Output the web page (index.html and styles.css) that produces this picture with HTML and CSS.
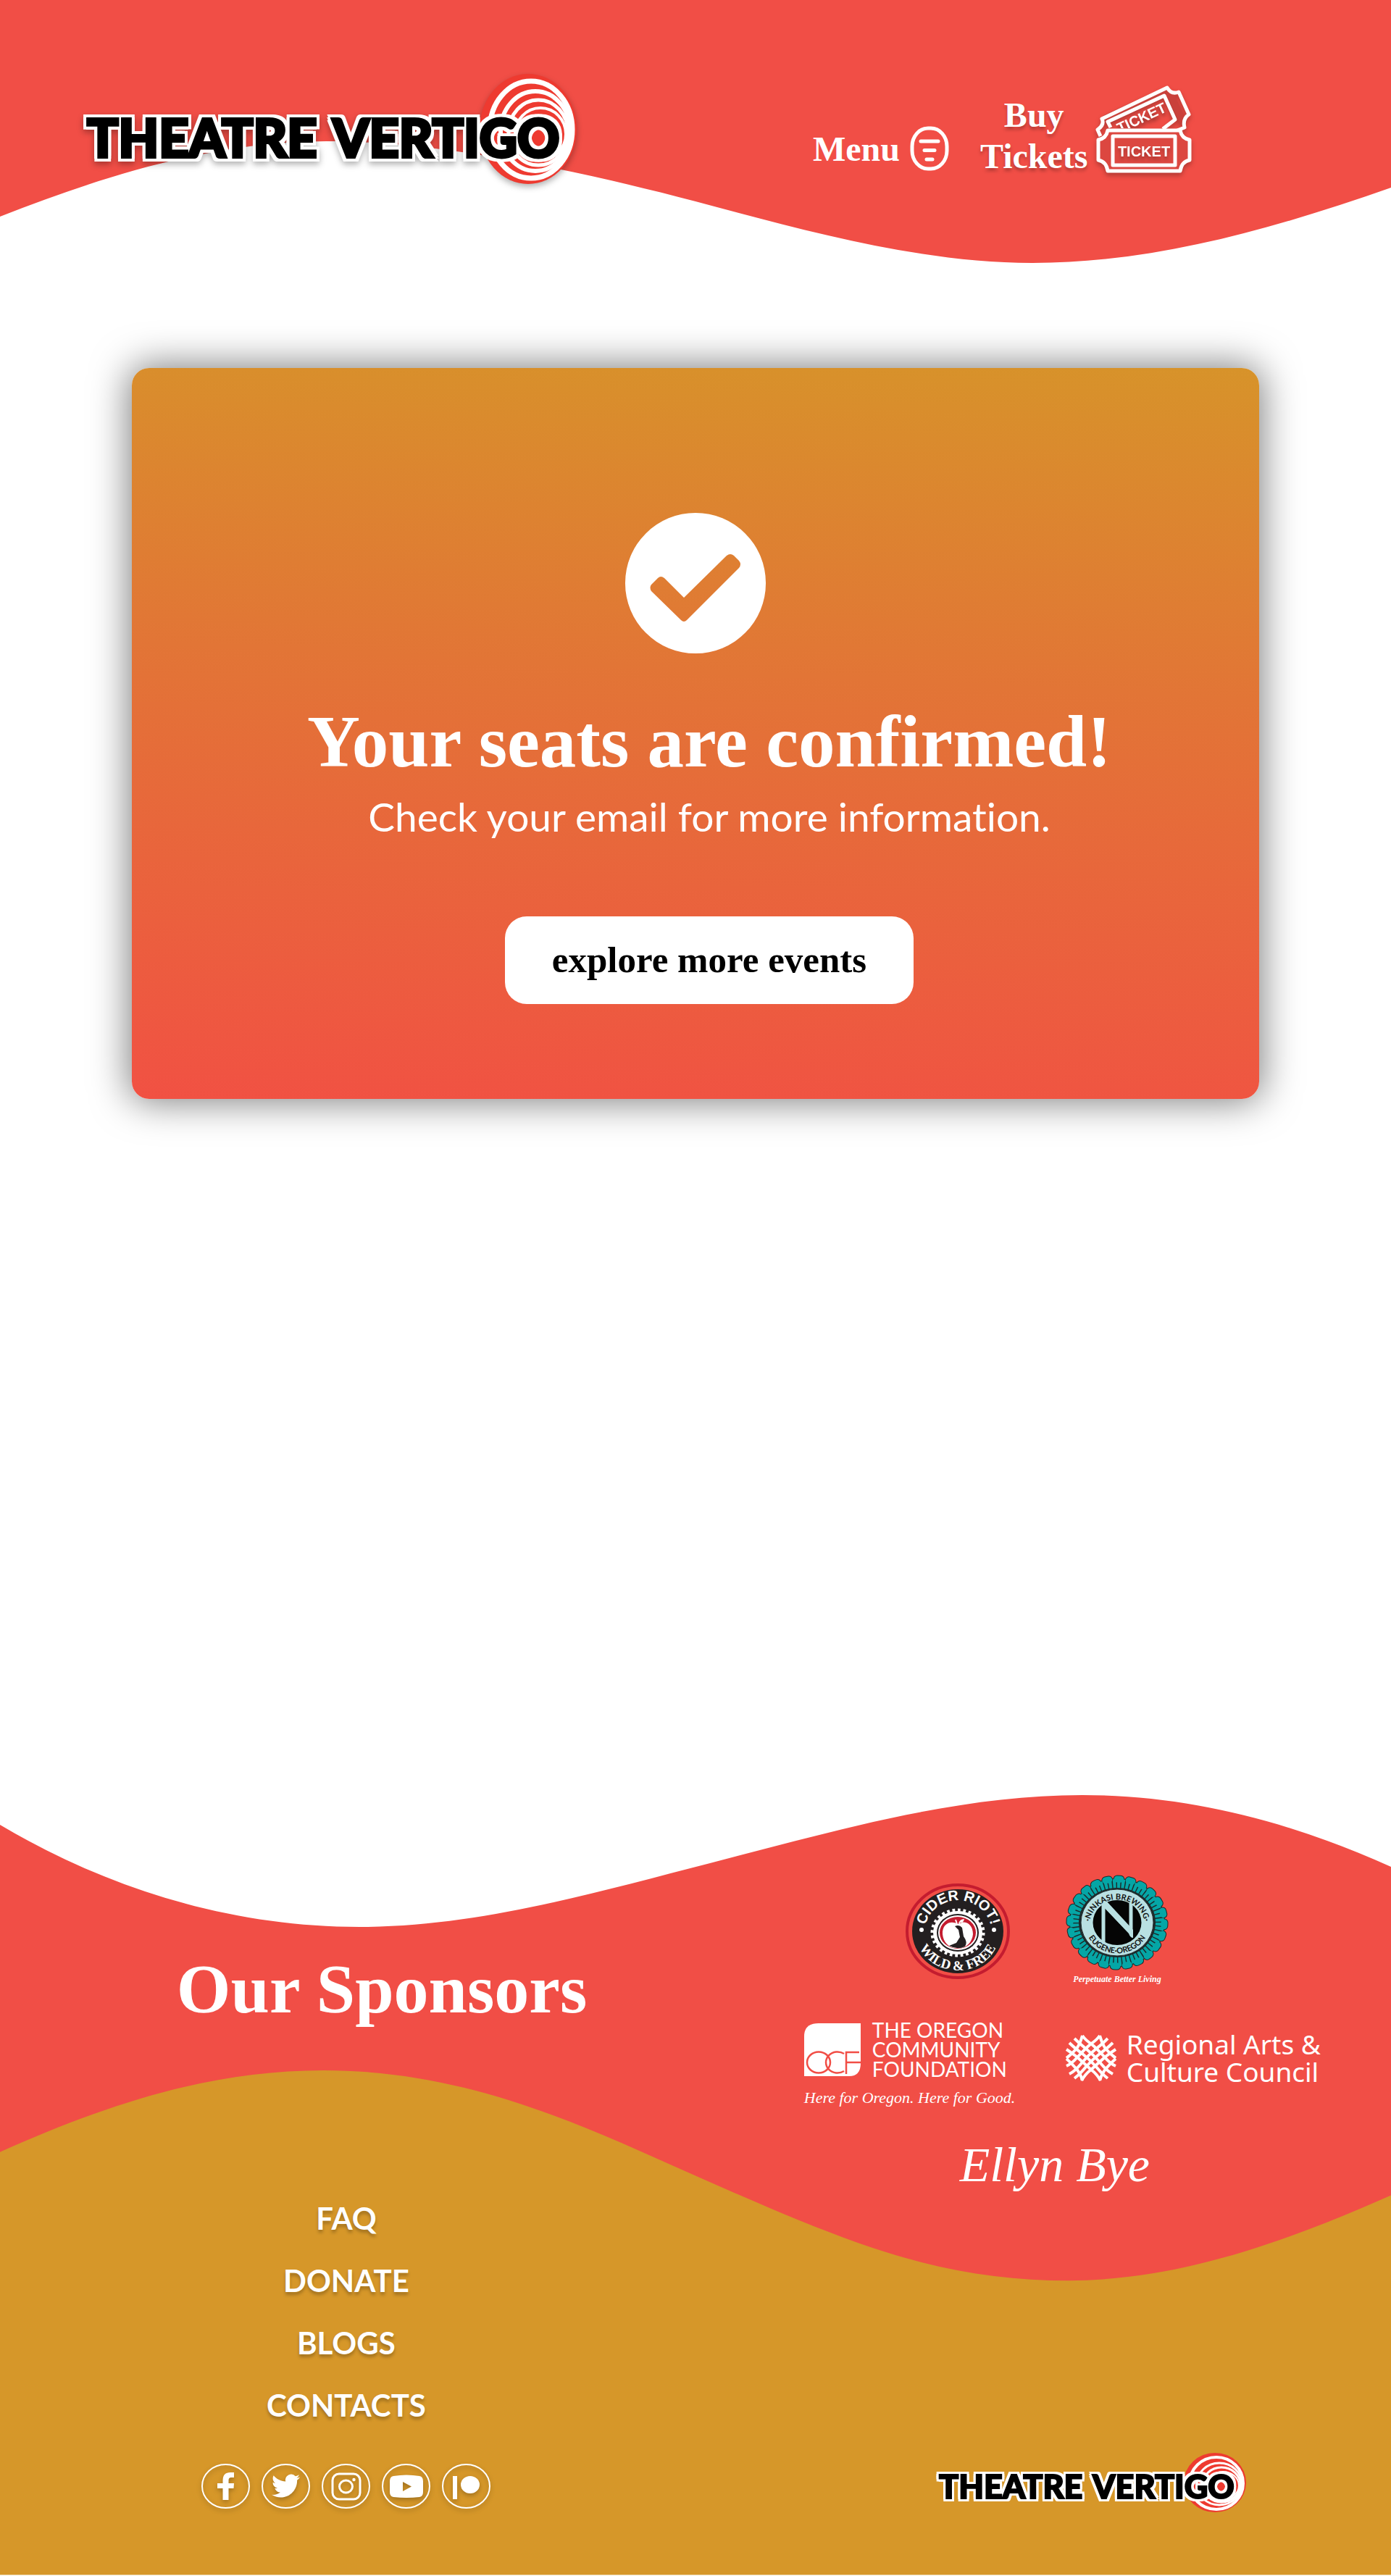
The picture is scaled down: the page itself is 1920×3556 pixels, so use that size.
FILE: index.html
```html
<!DOCTYPE html>
<html lang="en">
<head>
<meta charset="utf-8">
<meta name="viewport" content="width=device-width, initial-scale=1">
<title>Theatre Vertigo – Seats confirmed</title>
<link rel="stylesheet" href="styles.css">
</head>
<body>
<header class="site-header">
  <svg class="wave" viewBox="0 0 1920 363" preserveAspectRatio="none" aria-hidden="true">
    <path fill="#f14e46" d="M0 0H1920V259C1760 315 1595 363 1425 363C1270 363 1110 318 960 278C800 236 610 195 450 195C300 195 150 240 0 299Z"/>
  </svg>
  <a class="header-logo" href="#" aria-label="Theatre Vertigo home">
    <svg width="696" height="170" viewBox="0 0 696 170">
      <ellipse cx="620" cy="83" rx="67" ry="76" fill="#ee3a30"/>
      <g fill="none" stroke="#fff" stroke-width="7">
        <ellipse cx="624" cy="84" rx="57" ry="67"/>
        <ellipse cx="630" cy="86" rx="48" ry="55" stroke-width="6"/>
        <ellipse cx="634" cy="88" rx="41" ry="45" stroke-width="5"/>
        <ellipse cx="637" cy="90" rx="35" ry="36" stroke-width="4"/>
      </g>
      <g class="logo-text logo-text-large">
        <text x="11" y="122">THEATRE</text>
        <text x="350" y="122">VERTIGO</text>
      </g>
    </svg>
  </a>
  <nav class="main-nav" aria-label="Main">
    <button class="menu-button" type="button">Menu
      <svg width="54" height="62" viewBox="0 0 54 62" fill="none" stroke="#fff" stroke-width="5" stroke-linecap="round" aria-hidden="true">
        <rect x="3" y="3" width="48" height="56" rx="22" ry="25"/>
        <path d="M15 21H39M20 33.500H34M23 46H31"/>
      </svg>
    </button>
    <a class="tickets-link" href="#"><span>Buy<br>Tickets</span>
      <svg width="132" height="122" viewBox="0 0 132 122" aria-hidden="true">
        <g fill="none" stroke="#c9413b" stroke-width="10">
          <path d="M12 46L94 8M102 12L120 50M14 70V104M118 70V104M24 111H108M24 68H108"/>
        </g>
        <g fill="none" stroke="#fff" stroke-width="5" stroke-linejoin="round">
          <path d="M6 70L2 61Q12 54 8 46L98 3Q104 13 114 9L128 40Q119 46 122 58L112 62"/>
          <path d="M20 58L16 50L94 14L109 47L92 60"/>
          <path fill="#dc4740" d="M16 62H116Q118 73 129 75V103Q118 105 116 118H16Q14 105 3 103V75Q14 73 16 62Z"/>
          <rect x="23" y="70" width="86" height="40"/>
        </g>
        <text class="ticket-text" x="66" y="98" text-anchor="middle">TICKET</text>
        <g clip-path="url(#behind)"><text class="ticket-text" transform="rotate(-25 62 48)" x="64" y="52" text-anchor="middle">TICKET</text></g>
        <clipPath id="behind"><rect width="132" height="59"/></clipPath>
      </svg>
    </a>
  </nav>
</header>

<main class="page-main">
  <section class="confirm-card">
    <svg class="check" width="194" height="194" viewBox="0 0 194 194" role="img" aria-label="Confirmed">
      <path fill="#fff" fill-rule="evenodd" d="M97 0A97 97 0 1 1 97 194A97 97 0 1 1 97 0ZM36 99Q33 103 36 108L77 148Q81 152 85 148L157 76Q161 71 157 66L150 59Q145 55 140 59L81 117L54 90Q49 86 45 90Z"/>
    </svg>
    <div class="confirm-body">
      <h1>Your seats are confirmed!</h1>
      <p>Check your email for more information.</p>
      <button class="explore" type="button">explore more events</button>
    </div>
  </section>
</main>

<footer class="site-footer">
  <section class="sponsors">
    <svg class="wave" viewBox="0 0 1920 700" preserveAspectRatio="none" aria-hidden="true">
      <path fill="#f14e46" d="M0 41C150 130 320 182 496 182C660 182 820 135 980 94C1150 50 1320 0 1494 0C1640 0 1780 36 1920 99V700H0Z"/>
    </svg>
    <h2>Our Sponsors</h2>
    <div class="sponsor-logos">
      <div class="logo-row round-logos">
        <a href="#" aria-label="Cider Riot! Wild &amp; Free">
          <svg width="144" height="134" viewBox="0 0 144 134">
            <ellipse cx="72" cy="67" rx="70" ry="64" fill="none" stroke="#c41c2f" stroke-width="4"/>
            <ellipse cx="72" cy="67" rx="63" ry="58" fill="#231f20"/>
            <ellipse cx="72" cy="69" rx="34" ry="30" fill="#fff"/>
            <ellipse cx="72" cy="69" rx="35" ry="31" fill="none" stroke="#fff" stroke-width="5" pathLength="112" stroke-dasharray="2 2"/>
            <ellipse cx="72" cy="69" rx="29" ry="26" fill="#231f20"/>
            <ellipse cx="72" cy="69" rx="27" ry="24" fill="#fff"/>
            <ellipse cx="72" cy="69" rx="25" ry="22" fill="#c41c2f"/>
            <path fill="#fff" d="M72 57C62 51 50 57 51 71C52 83 61 91 71 90C82 92 92 83 93 71C93 56 81 51 72 57ZM73 56Q75 50 81 50Q80 56 73 56Z"/>
            <path fill="#231f20" d="M68 60Q74 57 78 62L80 74Q86 82 82 88Q72 93 60 87L70 83L75 75L73 65Z"/>
            <path d="M71 57L69 51" stroke="#fff" stroke-width="2"/>
            <g fill="#fff"><circle cx="22" cy="65" r="3"/><circle cx="122" cy="65" r="3"/></g>
            <path id="cider-top" fill="none" d="M27 61A46 43 0 0 1 118 61"/>
            <path id="cider-low" fill="none" d="M15 70A57 51 0 0 0 129 70"/>
            <text class="cider-text"><textPath href="#cider-top" startOffset="50%" text-anchor="middle">CIDER RIOT!</textPath></text>
            <text class="wild-text"><textPath href="#cider-low" startOffset="50%" text-anchor="middle">WILD &amp; FREE</textPath></text>
          </svg>
        </a>
        <a href="#" aria-label="Ninkasi Brewing, Eugene Oregon">
          <svg width="144" height="156" viewBox="0 0 144 156">
            <g fill="none" stroke-linecap="round">
              <ellipse cx="72" cy="66" rx="65" ry="60" stroke="#1c2a2b" stroke-width="11" pathLength="240" stroke-dasharray="3 7"/>
              <ellipse cx="72" cy="66" rx="58" ry="53" stroke="#1c2a2b" stroke-width="16"/>
              <ellipse cx="72" cy="66" rx="65" ry="60" stroke="#05a6a6" stroke-width="9" pathLength="240" stroke-dasharray="3 7"/>
              <ellipse cx="72" cy="66" rx="59" ry="54" stroke="#05a6a6" stroke-width="12" stroke-linecap="butt" pathLength="240" stroke-dasharray="3 1"/>
            </g>
            <ellipse cx="72" cy="66" rx="50" ry="46" fill="#b9e0e2" stroke="#1c2a2b"/>
            <ellipse cx="72" cy="66" rx="33.500" ry="31" fill="#050505"/>
            <path fill="none" stroke="#b9e0e2" stroke-width="5" d="M53 94V40L91 80V36"/>
            <path fill="#b9e0e2" d="M47 38L57 36L94 76V87Q90 87 88 81Z"/>
            <path id="nin-top" fill="none" d="M34 69A38 35 0 0 1 110 69"/>
            <path id="nin-low" fill="none" d="M27 66A45 42.500 0 0 0 117 66"/>
            <text class="nin-text"><textPath href="#nin-top" startOffset="50%" text-anchor="middle">·NINKASI BREWING·</textPath></text>
            <text class="nin-text"><textPath href="#nin-low" startOffset="50%" text-anchor="middle">EUGENE·OREGON</textPath></text>
            <text class="perpetuate" x="72" y="148" text-anchor="middle">Perpetuate Better Living</text>
          </svg>
        </a>
      </div>
      <div class="logo-row wide-logos">
        <a class="ocf" href="#">
          <svg width="78" height="73" viewBox="0 0 78 73" aria-hidden="true">
            <path fill="#fff" d="M20 0H78V55Q78 73 62 73H0V18Q0 0 20 0Z"/>
            <g fill="none" stroke="#f14e46" stroke-width="2.500"><ellipse cx="20" cy="54" rx="16" ry="14.500"/><path d="M55 42A16 14.500 0 1 0 55 66M58 70V40H76M58 54H78"/></g>
          </svg>
          <span class="ocf-name">THE OREGON<br>COMMUNITY<br>FOUNDATION</span>
          <em>Here for Oregon. Here for Good.</em>
        </a>
        <a class="racc" href="#">
          <svg width="70" height="64" viewBox="0 0 70 64" fill="none" stroke="#fff" stroke-width="4" aria-hidden="true">
            <g id="strands">
              <path d="M1 43Q8 40 16 31Q26 20 34 13Q43 7 47 1"/>
              <path d="M1 32Q8 27 15 19Q20 12 23 1"/>
              <path d="M5 54Q13 50 22 39Q31 28 41 20Q51 12 58 5"/>
              <path d="M12 60Q20 54 28 44Q37 34 47 26Q58 18 65 11"/>
              <path d="M22 63Q27 54 35 48Q46 38 55 30Q63 24 69 20"/>
              <path d="M47 63Q50 52 57 45Q63 38 69 33"/>
            </g>
            <use href="#strands" transform="matrix(-1 0 0 1 70 0)"/>
          </svg>
          <span>Regional Arts &amp;<br>Culture Council</span>
        </a>
      </div>
      <a class="ellyn" href="#">Ellyn Bye</a>
    </div>
  </section>

  <section class="footer-base">
    <svg class="wave" viewBox="0 0 1920 698" preserveAspectRatio="none" aria-hidden="true">
      <path fill="#d69729" d="M0 113C150 46 290 0 447 0C600 0 730 45 857 100C985 156 1110 216 1224 252C1310 279 1390 291 1475 291C1630 291 1780 235 1920 173V698H0Z"/>
    </svg>
    <div class="footer-nav">
      <nav class="footer-links" aria-label="Footer">
        <a href="#">FAQ</a>
        <a href="#">DONATE</a>
        <a href="#">BLOGS</a>
        <a href="#">CONTACTS</a>
      </nav>
      <div class="socials">
        <a href="#" aria-label="Facebook"><svg viewBox="0 0 67 62"><ellipse class="ring" cx="33.500" cy="31" rx="32.500" ry="30"/><path fill="#fff" d="M29.500 50V34H22V27H29.500V23Q29.500 12 40 12H45V19H41Q37.500 19 37.500 23V27H45L44.500 34H37.500V50Z"/></svg></a>
        <a href="#" aria-label="Twitter"><svg viewBox="0 0 67 62"><ellipse class="ring" cx="33.500" cy="31" rx="32.500" ry="30"/><path fill="#fff" transform="translate(14 11) scale(1.630)" d="M23.950 4.570a10 10 0 0 1-2.820.770 4.960 4.960 0 0 0 2.160-2.720c-.950.550-2 .960-3.130 1.180a4.920 4.920 0 0 0-8.380 4.480C7.690 8.090 4.070 6.130 1.640 3.160a4.820 4.820 0 0 0-.670 2.480c0 1.710.870 3.210 2.190 4.100a4.900 4.900 0 0 1-2.230-.620v.060a4.920 4.920 0 0 0 3.950 4.830 5 5 0 0 1-2.210.080 4.940 4.940 0 0 0 4.600 3.420A9.870 9.870 0 0 1 0 19.540a14 14 0 0 0 7.550 2.210c9.050 0 14-7.500 14-13.980 0-.210 0-.420-.020-.630a9.940 9.940 0 0 0 2.460-2.550z"/></svg></a>
        <a href="#" aria-label="Instagram"><svg viewBox="0 0 67 62"><ellipse class="ring" cx="33.500" cy="31" rx="32.500" ry="30"/><g fill="none" stroke="#fff" stroke-width="3"><rect x="15" y="14" width="38" height="35" rx="9"/><ellipse cx="33.500" cy="31.500" rx="9" ry="8.500"/></g><circle cx="44.500" cy="22" r="2.200" fill="#fff"/></svg></a>
        <a href="#" aria-label="YouTube"><svg viewBox="0 0 67 62"><ellipse class="ring" cx="33.500" cy="31" rx="32.500" ry="30"/><path fill="#fff" fill-rule="evenodd" d="M16 17Q34 14 52 17Q57 18 57 24V39Q57 45 52 46Q34 48 16 46Q11 45 11 39V24Q11 18 16 17ZM29 25V38L41 31.500Z"/></svg></a>
        <a href="#" aria-label="Patreon"><svg viewBox="0 0 67 62"><ellipse class="ring" cx="33.500" cy="31" rx="32.500" ry="30"/><path fill="#fff" d="M15 17H21V49H15Z"/><ellipse cx="39" cy="29" rx="13" ry="12" fill="#fff"/></svg></a>
      </div>
    </div>
    <a class="footer-logo" href="#" aria-label="Theatre Vertigo home">
      <svg width="430" height="78" viewBox="0 0 430 78">
        <ellipse cx="383" cy="42" rx="43" ry="41" fill="#ee3a30"/>
        <g fill="none" stroke="#fff" stroke-width="4">
          <ellipse cx="385" cy="43" rx="37" ry="36"/>
          <ellipse cx="389" cy="44" rx="31" ry="29" stroke-width="3"/>
          <ellipse cx="392" cy="45" rx="26" ry="24" stroke-width="3"/>
          <ellipse cx="394" cy="46" rx="22" ry="19" stroke-width="2"/>
        </g>
        <g class="logo-text logo-text-small">
          <text x="2" y="64">THEATRE</text>
          <text x="214" y="64">VERTIGO</text>
        </g>
      </svg>
    </a>
  </section>
</footer>
</body>
</html>
```
FILE: styles.css
```css
* { box-sizing: border-box; }

body {
  margin: 0;
  background: #fff;
  color: #fff;
  font-family: "Liberation Serif", serif;
}

a { color: inherit; text-decoration: none; }
svg { display: block; overflow: visible; }
h1, h2, p { margin: 0; }

button {
  border: 0;
  background: none;
  color: inherit;
  font: inherit;
  padding: 0;
  cursor: pointer;
}

/* Wave shapes lie behind the content of their section */
.wave {
  position: absolute;
  inset: 0;
  width: 100%;
  height: 100%;
  z-index: -1;
}

.site-header,
.sponsors,
.footer-base { position: relative; z-index: 0; }

.site-header {
  display: flex;
  justify-content: space-between;
  align-items: flex-start;
  padding: 95px 14.300% 98px 5.700%;
}

.header-logo { filter: drop-shadow(0 4px 4px rgba(0, 0, 0, .3)); }

/* Black letters, thickened, with a white edge on all four sides */
.logo-text {
  font-family: Lato, sans-serif;
  font-weight: 900;
  fill: #000;
  stroke: #000;
  stroke-linejoin: miter;
}
.logo-text-large {
  font-size: 72px;
  stroke-width: 4px;
  filter: drop-shadow(4px 0 0 #fff) drop-shadow(-4px 0 0 #fff) drop-shadow(0 4px 0 #fff) drop-shadow(0 -4px 0 #fff);
}
.logo-text-small {
  font-size: 45px;
  stroke-width: 2px;
  filter: drop-shadow(3px 0 0 #fff) drop-shadow(-3px 0 0 #fff) drop-shadow(0 3px 0 #fff) drop-shadow(0 -3px 0 #fff);
}

.main-nav {
  display: flex;
  align-items: flex-end;
  gap: 43px;
  padding-top: 23px;
  font-size: 48px;
  line-height: 57px;
  font-weight: 700;
  text-shadow: 0 4px 4px rgba(0, 0, 0, .25);
}

.menu-button {
  display: flex;
  align-items: center;
  gap: 14px;
  padding-bottom: 8px;
}

.tickets-link {
  display: flex;
  align-items: flex-end;
  gap: 12px;
  text-align: center;
}
.tickets-link svg { margin-bottom: 4px; filter: drop-shadow(0 4px 3px rgba(0, 0, 0, .25)); }
.ticket-text { font: 700 20px "Liberation Sans", sans-serif; fill: #fff; }

.page-main { padding: 145px 9.480% 961px; }

.confirm-card {
  display: flex;
  flex-direction: column;
  align-items: center;
  padding: 200px 40px 131px;
  border-radius: 24px;
  background: linear-gradient(183deg, #d7932a, #e27536 42%, #f15143);
  box-shadow: 0 0 52px 4px rgba(0, 0, 0, .5);
}

.confirm-body {
  display: flex;
  flex-direction: column;
  align-items: center;
  padding-left: 38px;
  text-align: center;
}
.confirm-body h1 { margin-top: 64px; font-size: 101px; line-height: 116px; }
.confirm-body p {
  margin-top: 10px;
  font: 400 55px/70px Lato, sans-serif;
  font-variant-ligatures: none;
}

.explore {
  width: 564px;
  margin-top: 103px;
  border-radius: 30px;
  background: #fff;
  color: #000;
  font-size: 51px;
  font-weight: 700;
  line-height: 121px;
}

.sponsors {
  display: flex;
  align-items: flex-start;
  justify-content: space-between;
  height: 700px;
  margin-bottom: -320px;
  padding: 110px 4.800% 0 12.700%;
}
.sponsors h2 { padding-top: 102px; font-size: 96px; line-height: 112px; }

.sponsor-logos { display: flex; flex-direction: column; width: 720px; }
.logo-row { display: flex; }
.round-logos { gap: 76px; padding-left: 142px; align-items: center; }
.wide-logos { justify-content: space-between; margin-top: 49px; }

.cider-text { font: 700 20px "Liberation Sans", sans-serif; fill: #fff; }
.wild-text { font: 700 19px "Liberation Serif", serif; fill: #fff; }
.nin-text { font: 700 11px Lato, sans-serif; fill: #111; }
.perpetuate { font: italic 700 12px "Liberation Serif", serif; fill: #fff; }

.ocf {
  display: grid;
  grid-template-columns: 78px auto;
  column-gap: 16px;
  padding-left: 2px;
}
.ocf-name { font: 400 28px/27px Lato, sans-serif; margin-top: -4px; }
.ocf em { grid-column: 1 / 3; margin-top: 12px; font-size: 22px; line-height: 28px; }

.racc {
  display: flex;
  align-items: center;
  gap: 14px;
  align-self: flex-start;
  margin-top: 10px;
  padding-right: 5px;
  font: 400 37px/38px "Noto Sans", sans-serif;
}

.ellyn {
  align-self: center;
  margin-top: 36px;
  padding-right: 24px;
  font-size: 68px;
  font-style: italic;
  line-height: 84px;
}

.footer-base {
  display: flex;
  justify-content: space-between;
  align-items: flex-end;
  padding: 161px 10.200% 91px 14.500%;
  border-bottom: 1px solid #ecd3a0;
}

.footer-nav { display: flex; flex-direction: column; align-items: center; gap: 38px; }

.footer-links {
  display: flex;
  flex-direction: column;
  align-items: center;
  font: 700 42px/86px Lato, sans-serif;
  text-shadow: 0 4px 4px rgba(0, 0, 0, .25);
}

.socials { display: flex; gap: 16px; filter: drop-shadow(0 3px 3px rgba(0, 0, 0, .25)); }
.socials svg { width: 67px; height: 62px; }
.ring { fill: none; stroke: #fff; stroke-width: 2; }
```
